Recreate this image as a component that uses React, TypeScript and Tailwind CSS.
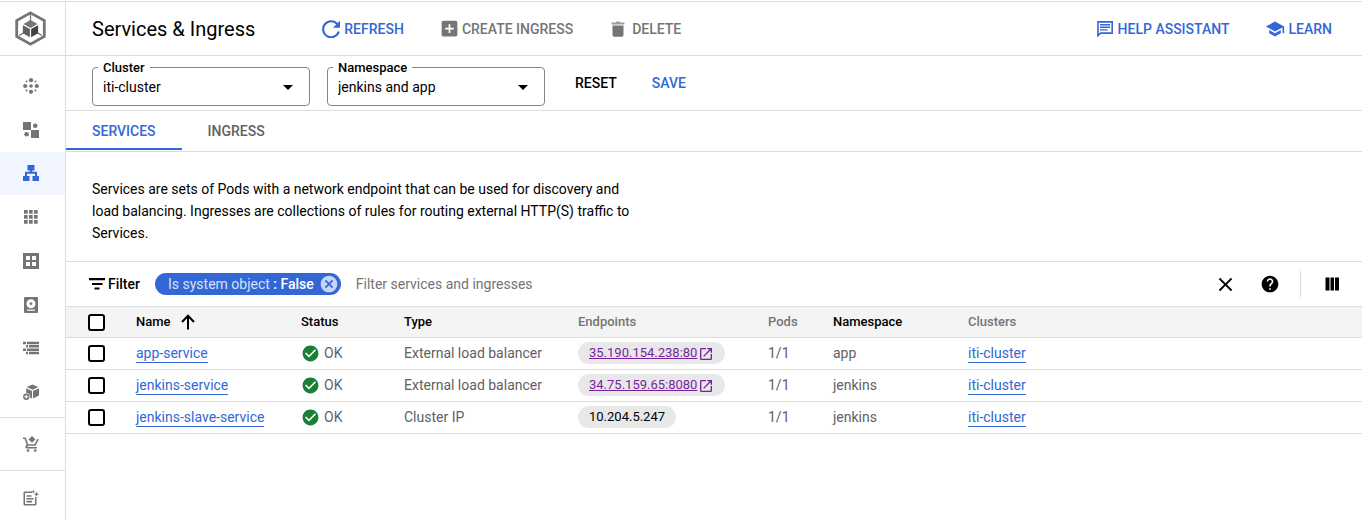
import type { ReactNode } from "react";
import {
  MdAddBox,
  MdArrowDropDown,
  MdCancel,
  MdCheckCircle,
  MdClose,
  MdHelp,
  MdOpenInNew,
  MdSchool,
} from "react-icons/md";

function Icon({ size = 16, children }: { size?: number; children: ReactNode }) {
  return (
    <svg width={size} height={size} viewBox="0 0 16 16" fill="currentColor" aria-hidden="true" className="block shrink-0">
      {children}
    </svg>
  );
}

function KubernetesEngineLogo() {
  return (
    <svg width="32" height="36" viewBox="0 0 32 36" aria-hidden="true" className="block">
      <path d="M15.5 1.9 29.3 9.6v15.800L15.5 33.1 1.7 25.4V9.6z" fill="none" stroke="#757575" strokeWidth="2.8" />
      <path d="M15.5 3v8M4 24.5l6-3.400M27 24.5l-6-3.400" stroke="#757575" strokeWidth="1.3" />
      <path d="m15.5 9 7 3.9-7 4-7-4z" fill="#757575" />
      <path d="m7.9 14.2 7 3.9v8.100l-7-3.900z" fill="#616161" />
      <path d="m23.1 14.2-7 3.9v8.100l7-3.900z" fill="#424242" />
    </svg>
  );
}

const icons = {
  clusters: (
    <Icon>
      <circle cx="8" cy="2.2" r="2.1" />
      <circle cx="8" cy="13.8" r="2.1" />
      <circle cx="2.2" cy="8" r="2.1" />
      <circle cx="13.8" cy="8" r="2.1" />
      <circle cx="8" cy="8" r="1.8" />
      <circle cx="3.6" cy="3.6" r="1" />
      <circle cx="12.4" cy="3.6" r="1" />
      <circle cx="3.6" cy="12.4" r="1" />
      <circle cx="12.4" cy="12.4" r="1" />
    </Icon>
  ),
  workloads: (
    <Icon>
      <path d="M0 0h8v8H0zM8 8h8v8H8z" />
      <circle cx="12.2" cy="3.8" r="2.3" />
      <circle cx="3.6" cy="12.3" r="2.3" />
    </Icon>
  ),
  services: (
    <Icon>
      <path d="M4.5 0h7v5.500H9.200v1.300h4.800v4.200h2v5H9.500v-5H12V8.800H4V11h2.500v5H0v-5h2V6.800h4.800V5.500H4.500z" />
    </Icon>
  ),
  applications: (
    <Icon>
      <path d="M1 1h3.700v3.700H1zM6 1h3.700v3.700H6zM11 1h3.700v3.700H11zM1 6h3.700v3.700H1zM6 6h3.700v3.700H6zM11 6h3.700v3.700H11zM1 11h3.700v3.700H1zM6 11h3.700v3.700H6zM11 11h3.700v3.700H11z" />
    </Icon>
  ),
  configuration: (
    <Icon>
      <path fillRule="evenodd" d="M0 0h16v16H0zM3 3v4h4V3zM9 3v4h4V3zM3 9v4h4V9zM9 9v4h4V9z" />
    </Icon>
  ),
  storage: (
    <Icon>
      <path fillRule="evenodd" d="M2 0h12a1 1 0 0 1 1 1v14a1 1 0 0 1-1 1H2a1 1 0 0 1-1-1V1a1 1 0 0 1 1-1zM8 2.200a4.500 4.500 0 1 0 0 9 4.500 4.500 0 0 0 0-9zM4 12.500v1.300h8v-1.300z" />
      <circle cx="8" cy="6.7" r="1.4" />
    </Icon>
  ),
  objects: (
    <Icon>
      <path d="M0 1.800h3v2.500H0zM4 1.800h12v2.500H4zM3 5.100h2v2.500H3zM6 5.100h10v2.500H6zM0 8.400h3v2.500H0zM4 8.400h12v2.500H4zM3 11.700h2v2.500H3zM6 11.700h10v2.500H6z" />
    </Icon>
  ),
  migrate: (
    <Icon>
      <path d="M9.500.400 15.300 3 9.500 5.800 3.700 3zM3.200 4.200 9 7v7.600L7.300 13.800A4 4 0 0 0 3.200 9zM16 4.200V11.500L10 14.600V7z" />
      <path fillRule="evenodd" d="M3.300 9.500a3.200 3.200 0 1 0 0 6.400 3.200 3.200 0 0 0 0-6.400zM2.700 10.900h1.200v1.200h1.200v1.200H3.900v1.200H2.700v-1.200H1.500v-1.200h1.200z" />
    </Icon>
  ),
  marketplace: (
    <Icon>
      <path d="M0 1.500h2.600L5.300 8.300h6.200l3-5.500 1.300.700-3.300 6.200H5.200L4.400 11H14v1.400H3.600a1.300 1.300 0 0 1-1.200-1.900l1.200-2L1.600 2.900H0z" />
      <path d="m9 .100 3.500 3.300L9 6.800 5.500 3.400z" />
      <circle cx="5" cy="14.6" r="1.3" />
      <circle cx="12.2" cy="14.6" r="1.3" />
    </Icon>
  ),
  notes: (
    <Icon>
      <path d="M9 1.500H1.800A1.300 1.300 0 0 0 .500 2.800v11.400a1.300 1.300 0 0 0 1.300 1.300h10.400a1.300 1.300 0 0 0 1.300-1.300V7H12v7H2V3h7z" />
      <path d="M3.500 5.200h5v1.600h-5zM3.500 8h7v1.600h-7zM3.500 10.800h5.500v1.600H3.500zM10.300 0l.600 1.200 1.200.600-1.200.600-.600 1.200-.600-1.200-1.200-.600 1.200-.600zM13.500 1.800l.800 1.700 1.700.800-1.700.800-.800 1.700-.800-1.700-1.700-.800 1.700-.800z" />
    </Icon>
  ),
};

const navItems = [
  { label: "Clusters", icon: icons.clusters },
  { label: "Workloads", icon: icons.workloads },
  { label: "Services & Ingress", icon: icons.services, active: true },
  { label: "Applications", icon: icons.applications },
  { label: "Secrets & ConfigMaps", icon: icons.configuration },
  { label: "Storage", icon: icons.storage },
  { label: "Object Browser", icon: icons.objects },
  { label: "Migrate to Containers", icon: icons.migrate },
];

function Sidebar() {
  return (
    <aside className="flex w-[66px] shrink-0 flex-col border-r border-[#dadce0] text-[#757575]">
      <a href="#" aria-label="Kubernetes Engine" className="flex h-[54px] items-center border-b border-[#dadce0] pl-[15px]">
        <KubernetesEngineLogo />
      </a>
      <nav className="flex h-[361px] flex-col pt-2 pb-[3px]">
        {navItems.map((item) => (
          <a
            key={item.label}
            href="#"
            aria-label={item.label}
            className={
              item.active
                ? "flex flex-1 items-center bg-[#f0f5ff] pl-[23px] text-[#3367d6]"
                : "flex flex-1 items-center pl-[23px]"
            }
          >
            {item.icon}
          </a>
        ))}
      </nav>
      <a href="#" aria-label="Marketplace" className="flex h-[53px] items-center border-t border-[#dadce0] pl-[23px]">
        {icons.marketplace}
      </a>
      <a href="#" aria-label="Release Notes" className="flex h-[54px] items-center border-t border-[#dadce0] pl-[23px]">
        {icons.notes}
      </a>
    </aside>
  );
}

function Header() {
  return (
    <header className="flex h-[54px] items-center border-b border-[#dadce0] pr-[30px] pl-[26px] font-medium">
      <h1 className="mr-[67px] text-xl font-normal text-black">Services &amp; Ingress</h1>
      <button type="button" className="mr-[37px] flex items-center gap-1 text-[#3367d6]">
        <svg width="18" height="18" viewBox="0 0 18 18" aria-hidden="true">
          <path d="M15.200 4A8 8 0 1 0 16.800 11.500" fill="none" stroke="currentColor" strokeWidth="2.1" />
          <path d="M18 .800V7.700h-7z" fill="currentColor" />
        </svg>
        REFRESH
      </button>
      <button type="button" className="mr-[37px] flex items-center gap-0.5 text-[#757575]">
        <MdAddBox size={21} className="-ml-0.5" />
        CREATE INGRESS
      </button>
      <button type="button" className="flex items-center gap-1.5 text-[#757575]">
        <Icon>
          <path d="M1.500 1.500h4L6.500.500h3l1 1h4v2h-13z" opacity=".7" />
          <path d="M2.500 4.500h11v9.500a1.800 1.800 0 0 1-1.800 1.800H4.300A1.800 1.800 0 0 1 2.500 14z" />
        </Icon>
        DELETE
      </button>
      <div className="ml-auto flex items-center gap-[35px] text-[#3367d6]">
        <button type="button" className="flex items-center gap-1">
          <svg width="18" height="18" viewBox="0 0 18 18" aria-hidden="true">
            <path d="M2 1.900h14.200v11.200H4.600L1.900 15.600z" fill="none" stroke="currentColor" strokeWidth="1.6" />
            <path d="M4 4.700h10M4 7.300h10M4 9.900h7.500" stroke="currentColor" strokeWidth="1.4" />
          </svg>
          HELP ASSISTANT
        </button>
        <a href="#" className="flex items-center gap-1">
          <MdSchool size={20} />
          LEARN
        </a>
      </div>
    </header>
  );
}

function ScopeSelect({ id, label, value }: { id: string; label: string; value: string }) {
  return (
    <div className="relative w-[218px]">
      <label htmlFor={id} className="absolute -top-[7px] left-1.5 bg-white px-[5px] text-[13px] leading-4 font-medium text-black">
        {label}
      </label>
      <select
        id={id}
        defaultValue={value}
        className="h-[39px] w-full appearance-none rounded border border-[#80868b] bg-transparent pt-0.5 pr-9 pl-2.5 text-sm text-black"
      >
        <option>{value}</option>
      </select>
      <MdArrowDropDown size={24} className="pointer-events-none absolute top-2 right-2.5 text-black" />
    </div>
  );
}

function ScopeBar() {
  return (
    <div className="flex h-[55px] items-center gap-[17px] border-b border-[#dadce0] pt-1.5 pl-[26px]">
      <ScopeSelect id="cluster" label="Cluster" value="iti-cluster" />
      <ScopeSelect id="namespace" label="Namespace" value="jenkins and app" />
      <div className="flex gap-[35px] pb-1.5 pl-[13px] font-medium">
        <button type="button" className="text-black">RESET</button>
        <button type="button" className="text-[#3367d6]">SAVE</button>
      </div>
    </div>
  );
}

function Tabs() {
  return (
    <div role="tablist" className="flex h-[41px] border-b border-[#dadce0] pb-px font-medium">
      <button role="tab" aria-selected="true" type="button" className="border-b-2 border-[#3367d6] px-[26px] pt-0.5 text-[#3367d6]">
        SERVICES
      </button>
      <button role="tab" aria-selected="false" type="button" className="border-b-2 border-transparent px-[26px] pt-0.5 text-[#616161]">
        INGRESS
      </button>
    </div>
  );
}

function FilterBar() {
  return (
    <div className="flex h-[45px] items-center border-t border-[#dadce0] pr-[22px] pl-[23px] text-black">
      <label htmlFor="filter" className="mr-[15px] flex items-center gap-[3px] font-medium">
        <Icon>
          <path d="M0 2h16v2.200H0zM3 7h10.500v2H3zM5.500 11.500h5v2h-5z" />
        </Icon>
        Filter
      </label>
      <span className="flex h-[22px] items-center rounded-full bg-[#3367d6] pr-0.5 pl-[13px] text-[#d6e1f8]">
        Is system object&nbsp;<b className="font-medium text-white">: False</b>
        <button type="button" aria-label="Remove filter" className="ml-[5px] text-[#c6d6f7]">
          <MdCancel size={20} />
        </button>
      </span>
      <input
        id="filter"
        type="text"
        placeholder="Filter services and ingresses"
        className="ml-[15px] min-w-0 flex-1 bg-transparent outline-none placeholder:text-[#757575]"
      />
      <button type="button" aria-label="Clear filters" className="mr-[23px]">
        <MdClose size={23} />
      </button>
      <button type="button" aria-label="Help" className="mr-5">
        <MdHelp size={20} />
      </button>
      <div className="mr-[23px] h-[26px] w-px bg-[#dadce0]" />
      <button type="button" aria-label="Column display options">
        <Icon>
          <path d="M1.500 1.500h4v13h-4zM6.500 1.500h3.500v13H6.500zM11 1.500h4v13h-4z" />
        </Icon>
      </button>
    </div>
  );
}

function RowCheckbox({ label }: { label: string }) {
  return (
    <input
      type="checkbox"
      aria-label={label}
      className="ml-[22px] block size-[17px] appearance-none rounded-[3px] border-2 border-black bg-white checked:bg-black"
    />
  );
}

const rows = [
  { name: "app-service", type: "External load balancer", endpoint: "35.190.154.238:80", external: true, pods: "1/1", namespace: "app" },
  { name: "jenkins-service", type: "External load balancer", endpoint: "34.75.159.65:8080", external: true, pods: "1/1", namespace: "jenkins" },
  { name: "jenkins-slave-service", type: "Cluster IP", endpoint: "10.204.5.247", external: false, pods: "1/1", namespace: "jenkins" },
];

function ServicesTable() {
  return (
    <table className="w-full table-fixed border-separate border-spacing-0 text-left">
      <colgroup>
        <col className="w-[70px]" />
        <col className="w-[165px]" />
        <col className="w-[103px]" />
        <col className="w-[174px]" />
        <col className="w-[190px]" />
        <col className="w-[65px]" />
        <col className="w-[135px]" />
        <col />
      </colgroup>
      <thead className="bg-[#f4f4f4] text-[13px] text-black [&_th]:h-8 [&_th]:border-y [&_th]:border-[#dadce0] [&_th]:p-0 [&_th]:font-medium">
        <tr>
          <th scope="col"><RowCheckbox label="Select all rows" /></th>
          <th scope="col" aria-sort="ascending">
            <span className="flex items-center gap-[9px]">
              Name
              <Icon>
                <path d="M8 15.500V2M2 8l6-6.200L14 8" fill="none" stroke="currentColor" strokeWidth="2" />
              </Icon>
            </span>
          </th>
          <th scope="col">Status</th>
          <th scope="col">Type</th>
          <th scope="col" className="text-[#757575]">Endpoints</th>
          <th scope="col" className="text-[#757575]">Pods</th>
          <th scope="col">Namespace</th>
          <th scope="col" className="text-[#757575]">Clusters</th>
        </tr>
      </thead>
      <tbody className="text-[#616161] [&_td]:h-8 [&_td]:border-b [&_td]:border-[#dadce0] [&_td]:p-0 [&_td]:pb-px">
        {rows.map((row) => (
          <tr key={row.name}>
            <td><RowCheckbox label={`Select ${row.name}`} /></td>
            <td>
              <a href="#" className="inline-block border-b border-[#3367d6] leading-[18px] text-[#3367d6]">{row.name}</a>
            </td>
            <td>
              <span className="flex items-center gap-1">
                <MdCheckCircle size={19} className="text-[#188038]" />
                OK
              </span>
            </td>
            <td>{row.type}</td>
            <td>
              <span className="inline-flex h-[22px] items-center rounded-full bg-[#e8e8e8] px-[11px] pt-px align-middle text-[13px] text-black">
                {row.external ? (
                  <a href="#" className="flex items-center gap-px text-[#7b1fa2]">
                    <span className="underline">{row.endpoint}</span>
                    <MdOpenInNew size={16} />
                  </a>
                ) : (
                  row.endpoint
                )}
              </span>
            </td>
            <td>{row.pods}</td>
            <td>{row.namespace}</td>
            <td>
              <a href="#" className="inline-block border-b border-[#3367d6] leading-[18px] text-[#3367d6]">iti-cluster</a>
            </td>
          </tr>
        ))}
      </tbody>
    </table>
  );
}

export default function App() {
  return (
    <div className="min-h-screen bg-white pt-px font-['Roboto',sans-serif] text-sm">
      <div className="flex min-h-[calc(100vh-1px)] border-t border-[#dadce0]">
        <Sidebar />
        <main className="min-w-0 flex-1">
          <Header />
          <ScopeBar />
          <Tabs />
          <p className="max-w-[580px] pt-[26px] pb-[17px] pl-[26px] leading-[22px] text-black">
            Services are sets of Pods with a network endpoint that can be used for discovery and load balancing. Ingresses
            are collections of rules for routing external HTTP(S) traffic to Services.
          </p>
          <FilterBar />
          <ServicesTable />
        </main>
      </div>
    </div>
  );
}
